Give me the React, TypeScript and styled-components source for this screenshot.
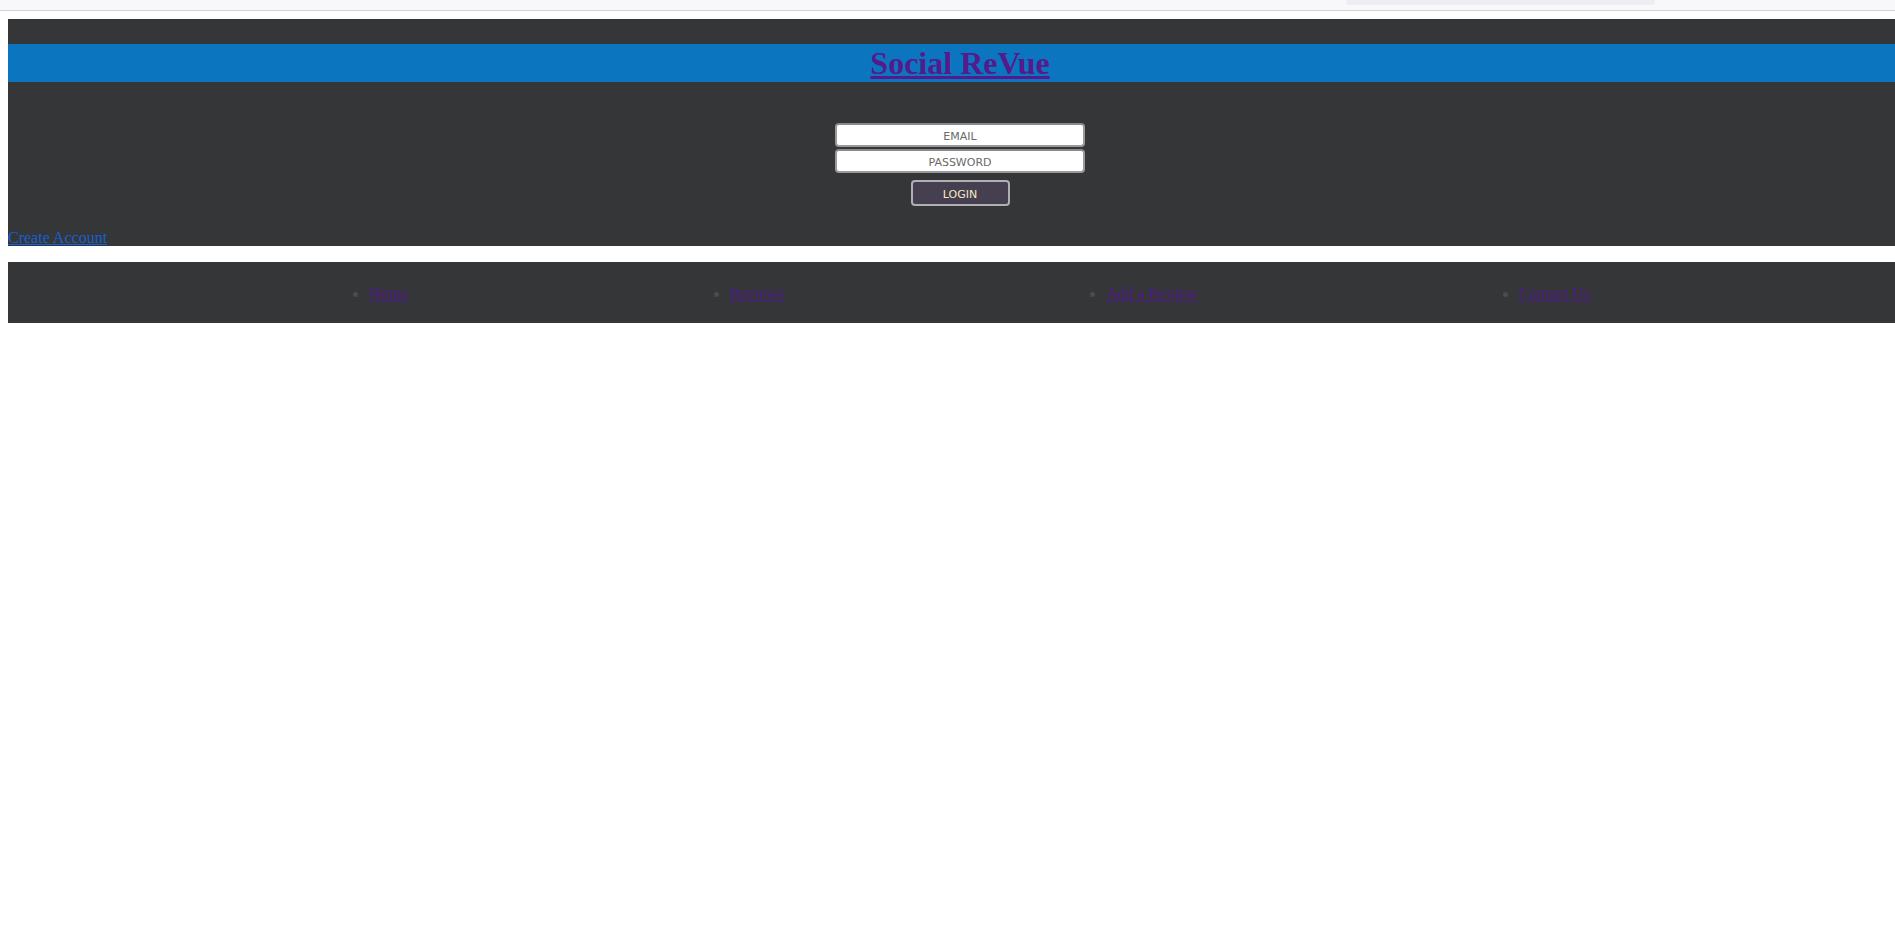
import React from "react";
import styled, { createGlobalStyle } from "styled-components";

const GlobalStyle = createGlobalStyle`
  html, body {
    margin: 0;
    padding: 0;
    background: #ffffff;
    overflow: hidden;
    font-family: "Liberation Serif", "Times New Roman", serif;
    font-size: 16px;
  }
`;

const TopStrip = styled.div`
  height: 10px;
  background: #f8f8fa;
  border-bottom: 1px solid #d2d2d4;
  display: flex;
  padding-left: 1346px;
  box-sizing: content-box;
`;

const TabHint = styled.div`
  width: 309px;
  height: 5px;
  background: #eeedf2;
  border-radius: 0 0 3px 3px;
`;

const Page = styled.div`
  padding: 8px;
  width: 1904px;
  display: flex;
  flex-direction: column;
  gap: 16px;
`;

const Header = styled.header`
  background: #353638;
  display: flex;
  flex-direction: column;
  padding-top: 25px;
`;

const Title = styled.h1`
  margin: 0;
  background: #0b76bf;
  text-align: center;
  font-family: "Liberation Serif", "Times New Roman", serif;
  font-weight: bold;
  font-size: 32px;
  line-height: 38px;
`;

const TitleLink = styled.a`
  color: #551a8b;
  text-decoration: underline;
`;

const LoginForm = styled.form`
  display: flex;
  flex-direction: column;
  align-items: center;
  margin-top: 41px;
`;

const Field = styled.input<{ $gap?: number }>`
  box-sizing: border-box;
  width: 250px;
  height: 24px;
  margin: 0 0 ${(p) => p.$gap ?? 0}px 0;
  padding: 2px 4px 0;
  background: #ffffff;
  border: 2px solid #9a9a9c;
  border-top-color: #8a8a8c;
  border-radius: 4px;
  text-align: center;
  font-family: "DejaVu Sans", Verdana, sans-serif;
  font-size: 11px;
  color: #555;
  outline: none;
  &::placeholder {
    color: #6a6a6a;
    opacity: 1;
  }
`;

const LoginButton = styled.button`
  box-sizing: border-box;
  width: 99px;
  height: 26px;
  margin-top: 7px;
  background: #463f4f;
  border: 2px solid #b0b0b2;
  border-radius: 4px;
  color: #f3e9c4;
  font-family: "DejaVu Sans", Verdana, sans-serif;
  font-size: 11px;
  padding: 2px 0 0;
  cursor: pointer;
`;

const CreateLink = styled.a`
  margin-top: 24px;
  align-self: flex-start;
  color: #1660d2;
  text-decoration: underline;
  font-size: 16px;
  line-height: 16px;
`;

const Nav = styled.nav`
  background: #353638;
  padding: 23px 0 20px;
`;

const NavList = styled.ul`
  margin: 0;
  padding: 0 0 0 40px;
  display: flex;
  justify-content: space-evenly;
  list-style: disc outside;
`;

const NavItem = styled.li`
  display: list-item;
  color: #4d4a55;
  line-height: 18px;
  &::marker {
    color: #4d4a55;
  }
`;

const NavLink = styled.a`
  color: #4f1b8a;
  text-decoration: underline;
`;

const navItems = ["Home", "Reviews", "Add a Review", "Contact Us"];

export default function App() {
  return (
    <>
      <GlobalStyle />
      <TopStrip>
        <TabHint />
      </TopStrip>
      <Page>
        <Header>
          <Title>
            <TitleLink href="#">Social ReVue</TitleLink>
          </Title>
          <LoginForm onSubmit={(e) => e.preventDefault()}>
            <Field type="text" placeholder="EMAIL" $gap={2} />
            <Field type="password" placeholder="PASSWORD" />
            <LoginButton type="submit">LOGIN</LoginButton>
          </LoginForm>
          <CreateLink href="#">Create Account</CreateLink>
        </Header>
        <Nav>
          <NavList>
            {navItems.map((item) => (
              <NavItem key={item}>
                <NavLink href="#">{item}</NavLink>
              </NavItem>
            ))}
          </NavList>
        </Nav>
      </Page>
    </>
  );
}
